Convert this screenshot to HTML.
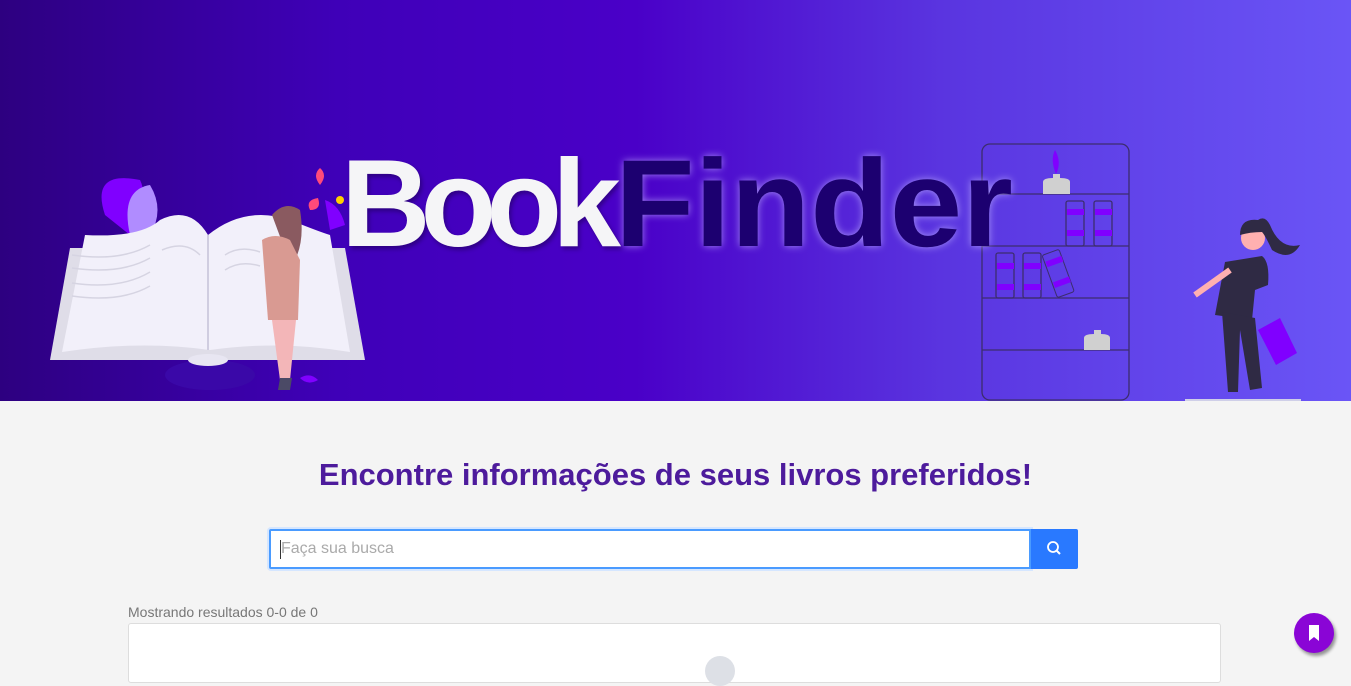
<!DOCTYPE html>
<html><head><meta charset="utf-8"><style>
*{margin:0;padding:0;box-sizing:border-box}
body{width:1351px;height:667px;overflow:hidden;background:#f4f4f4;font-family:"Liberation Sans",sans-serif;position:relative}
.banner{position:absolute;left:0;top:0;width:1351px;height:401px;background:linear-gradient(90deg,#2d0080 0%,#3f00b8 25%,#4a00c8 47%,#5a35e0 70%,#6a55f6 100%)}
.lg{position:absolute;top:142px;font-weight:bold;font-size:124px;white-space:nowrap;line-height:1;transform-origin:left top}
.b{left:341px;color:#f5f5f7;letter-spacing:-10px;text-shadow:2px 3px 4px rgba(0,0,0,.3)}
.f{left:615px;color:#1c0070;letter-spacing:0px;transform:scaleX(1.05);text-shadow:0 0 8px rgba(200,190,255,.7)}
h1{position:absolute;top:457px;left:0;width:1351px;text-align:center;font-size:31px;color:#4d1b9c;font-weight:bold}
.search{position:absolute;left:269px;top:529px;width:762px;height:40px;background:#fff;border:2px solid #4a9bff;border-radius:2px 0 0 2px;box-shadow:0 0 0 2px #d5e6ff}
.search span{position:absolute;left:10px;top:9px;font-size:16px;color:#aaa}
.search i{position:absolute;left:9px;top:9px;width:1px;height:19px;background:#333}
.btn{position:absolute;left:1031px;top:529px;width:47px;height:40px;background:#2979ff;border-radius:0 2px 2px 0}
.res{position:absolute;left:128px;top:604px;font-size:14px;color:#777}
.card{position:absolute;left:128px;top:623px;width:1093px;height:60px;background:#fff;border:1px solid #ddd;border-radius:3px}
.fab{position:absolute;left:1294px;top:613px;width:40px;height:40px;border-radius:50%;background:#8a05d6;box-shadow:2px 3px 3px rgba(0,0,0,.4)}
</style></head><body>
<div class="banner">
<svg width="1351" height="401" style="position:absolute;left:0;top:0">
 <ellipse cx="210" cy="375" rx="45" ry="15" fill="#3a08a8"/>
 <path d="M105 215 Q90 170 140 180 Q150 200 130 235Z" fill="#8000ff"/>
 <path d="M130 235 Q120 190 150 185 Q165 210 150 235Z" fill="#b08cff"/>
 <path d="M50 360 L70 248 L345 248 L365 360 Z" fill="#dfdde8"/>
 <path d="M62 352 L85 235 Q140 238 160 220 Q190 205 208 235 Q245 205 290 220 Q320 232 330 235 L350 352 Q280 340 210 350 Q140 340 62 352Z" fill="#f2f0fa"/>
 <line x1="208" y1="235" x2="208" y2="350" stroke="#d0cde0" stroke-width="2"/>
 <g stroke="#d6d4e2" fill="none" stroke-width="1.5">
 <path d="M72 255 Q120 262 150 245"/><path d="M72 268 Q120 275 150 258"/><path d="M72 283 Q120 290 150 272"/><path d="M72 296 Q120 303 150 286"/>
 <path d="M162 250 Q185 240 200 255"/><path d="M225 255 Q240 245 260 252"/><path d="M225 270 Q240 260 260 266"/>
 </g>
 <ellipse cx="208" cy="360" rx="20" ry="6" fill="#e8e6f2"/>
 <path d="M320 185 Q312 175 320 168 Q328 175 320 185Z" fill="#ff4a7a"/>
 <circle cx="340" cy="200" r="4" fill="#ffd000"/>
 <path d="M310 210 Q305 200 318 198 Q322 210 310 210Z" fill="#ff4a7a"/>
 <path d="M325 200 Q340 205 345 225 L330 230Z" fill="#8000ff"/>
 <path d="M272 215 Q285 200 300 210 Q305 240 295 260 L285 250 Z" fill="#8a5a60"/>
 <path d="M262 240 Q275 232 290 240 L300 260 L298 320 L268 320 Z" fill="#d99a92"/>
 <path d="M272 320 L280 380 L290 380 L296 320Z" fill="#f3b6b8"/>
 <path d="M280 378 L292 378 L290 390 L278 390Z" fill="#4b4a66"/>
 <path d="M300 378 Q310 372 318 380 Q308 386 300 378Z" fill="#8000ff"/>
 <g stroke="#3c2d6e" stroke-width="1.3" fill="none">
 <rect x="982" y="144" width="147" height="256" rx="8"/>
 <line x1="982" y1="194" x2="1129" y2="194"/><line x1="982" y1="246" x2="1129" y2="246"/><line x1="982" y1="298" x2="1129" y2="298"/><line x1="982" y1="350" x2="1129" y2="350"/>
 <rect x="1066" y="201" width="18" height="45" rx="2"/><rect x="1094" y="201" width="18" height="45" rx="2"/>
 <rect x="996" y="253" width="18" height="45" rx="2"/><rect x="1023" y="253" width="18" height="45" rx="2"/>
 </g>
 <g fill="#8000ff"><rect x="1067" y="209" width="17" height="6"/><rect x="1067" y="230" width="17" height="6"/><rect x="1095" y="209" width="17" height="6"/><rect x="1095" y="230" width="17" height="6"/>
 <rect x="997" y="263" width="17" height="6"/><rect x="997" y="284" width="17" height="6"/><rect x="1024" y="263" width="17" height="6"/><rect x="1024" y="284" width="17" height="6"/></g>
 <g transform="rotate(-20 1058 273)"><rect x="1049" y="251" width="18" height="45" rx="2" fill="none" stroke="#3c2d6e"/><rect x="1050" y="258" width="17" height="6" fill="#8000ff"/><rect x="1050" y="280" width="17" height="6" fill="#8000ff"/></g>
 <path d="M1043 194 L1043 182 Q1043 178 1053 178 L1053 174 L1060 174 L1060 178 Q1070 178 1070 182 L1070 194Z" fill="#d0d0d0"/>
 <path d="M1084 350 L1084 338 Q1084 334 1094 334 L1094 330 L1101 330 L1101 334 Q1110 334 1110 338 L1110 350Z" fill="#d0d0d0"/>
 <path d="M1056 174 Q1050 160 1055 150 Q1062 162 1056 174Z" fill="#8000ff"/>
 <circle cx="1253" cy="238" r="12" fill="#ffb0b0"/>
 <path d="M1240 235 Q1240 218 1258 220 Q1265 215 1270 225 Q1280 250 1300 245 Q1290 262 1272 250 Q1265 235 1262 232 Q1250 232 1240 235Z" fill="#2f2a44"/>
 <path d="M1225 262 L1262 256 Q1270 262 1268 285 L1255 290 L1252 320 L1215 315 Z" fill="#2f2a44"/>
 <path d="M1230 270 L1195 295" stroke="#ffb0b0" stroke-width="6"/>
 <path d="M1222 312 L1228 392 L1238 392 L1240 330 L1250 390 L1262 388 L1255 318Z" fill="#2f2a44"/>
 <path d="M1258 330 L1280 318 L1297 353 L1276 365Z" fill="#8000ff"/>
 <rect x="1185" y="399" width="116" height="2" fill="#cfcfe8"/>
</svg>
<div class="lg b">Book</div><div class="lg f">Finder</div>
</div>
<h1>Encontre informações de seus livros preferidos!</h1>
<div class="search"><i></i><span>Faça sua busca</span></div>
<div class="btn"><svg width="47" height="40"><circle cx="22" cy="18" r="5" stroke="#fff" stroke-width="1.8" fill="none"/><line x1="26" y1="22" x2="29" y2="25" stroke="#fff" stroke-width="2"/></svg></div>
<div class="res">Mostrando resultados 0-0 de 0</div>
<div class="card"><div style="position:absolute;left:576px;top:32px;width:30px;height:30px;border-radius:50%;background:#dde0e6"></div></div>
<div class="fab"><svg width="40" height="40"><path d="M15 12 H25 V28 L20 24 L15 28Z" fill="#fff"/></svg></div>
</body></html>
